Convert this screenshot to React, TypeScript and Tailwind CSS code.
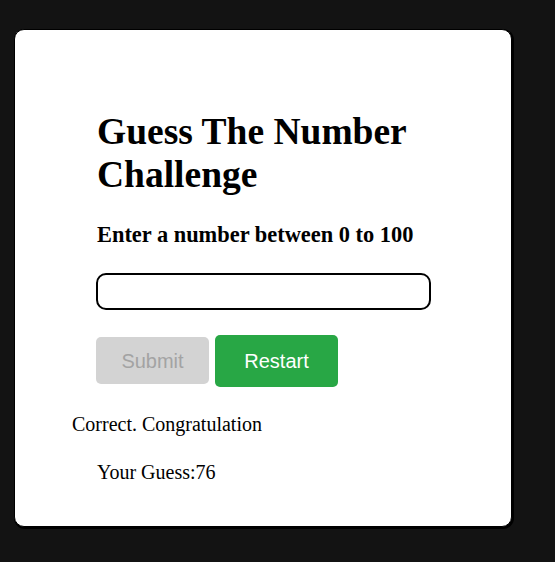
const App = () => {
  return (
    <div className="min-h-screen bg-[#131313] pt-[29px] pl-[14px]">
      <div className="w-[498px] h-[498px] bg-white rounded-[10px] border border-black shadow-[1px_1px_0_1px_#000] pt-[80px]">
        <div className="pl-[82px] w-[418px] font-['Liberation_Serif',serif] text-black">
          <h1 className="text-[37.5px] font-bold leading-[43px]">
            Guess The Number Challenge
          </h1>
          <h3 className="text-[22.4px] font-bold pt-[22px]">
            Enter a number between 0 to 100
          </h3>
          <input
            type="text"
            className="mt-[21px] -ml-px w-[335px] h-[37px] border-2 border-black rounded-[10px] px-2 outline-none"
          />
          <div className="flex items-center gap-[6px] pt-[25px] -ml-px font-['Liberation_Sans',sans-serif]">
            <button className="w-[113px] h-[47px] rounded-[5px] bg-[#d3d3d3] text-[#a3a3a3] text-[20px]">
              Submit
            </button>
            <button className="w-[123px] h-[52px] rounded-[5px] bg-[#28a745] text-white text-[20px]">
              Restart
            </button>
          </div>
        </div>
        <p className="pl-[57px] pt-[22px] text-[20px] font-['Liberation_Serif',serif]">
          Correct. Congratulation
        </p>
        <p className="pl-[82px] pt-[18px] text-[20px] font-['Liberation_Serif',serif]">
          Your Guess:76
        </p>
      </div>
    </div>
  );
};

export default App;
